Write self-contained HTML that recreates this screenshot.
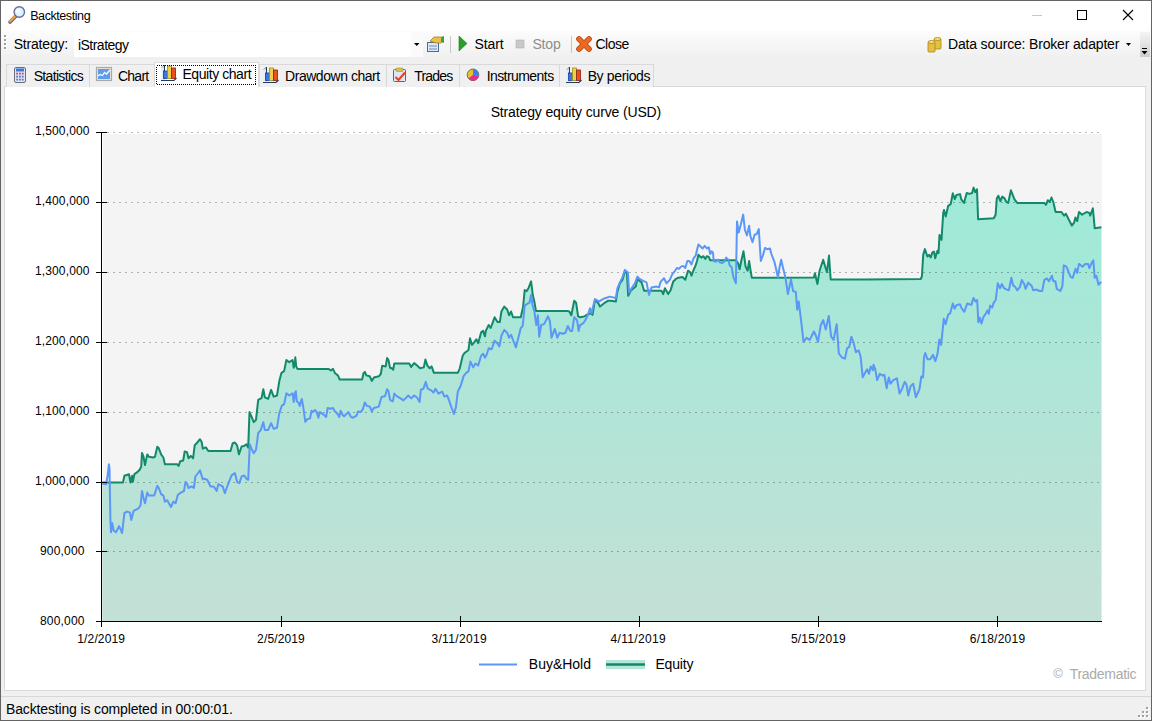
<!DOCTYPE html>
<html><head><meta charset="utf-8">
<style>
*{margin:0;padding:0;box-sizing:border-box}
html,body{width:1152px;height:721px;overflow:hidden;background:#fff;font-family:"Liberation Sans", sans-serif;color:#000}
.abs{position:absolute}
.t{position:absolute;white-space:nowrap}
.tab{position:absolute;top:64px;height:23px;background:#f0f0f0;border:1px solid #d9d9d9;border-bottom:none}
</style></head><body>
<div class="abs" style="left:1px;top:31px;width:1150px;height:27px;background:linear-gradient(#fcfcfc,#f0f0f0)"></div>
<div class="abs" style="left:74px;top:32px;width:349px;height:25px;background:#fff"></div>
<div class="abs" style="left:411px;top:32px;width:12px;height:25px;background:#fafafa"></div>
<div class="abs" style="left:1px;top:58px;width:1150px;height:638px;background:#f0f0f0"></div>
<div class="abs" style="left:1px;top:696px;width:1150px;height:1px;background:#d7d7d7"></div>
<div class="abs" style="left:1px;top:697px;width:1150px;height:23px;background:#f0f0f0"></div>
<div class="abs" style="left:4px;top:86px;width:1142px;height:605px;background:#fff;border:1px solid #d9d9d9"></div>
<div class="tab" style="left:6px;width:84px"></div>
<div class="tab" style="left:89px;width:66px"></div>
<div class="tab" style="left:259px;width:128px"></div>
<div class="tab" style="left:386px;width:74px"></div>
<div class="tab" style="left:459px;width:101px"></div>
<div class="tab" style="left:559px;width:95px"></div>
<div class="abs" style="left:154px;top:62px;width:105px;height:25px;background:#fff;border:1px solid #d9d9d9;border-bottom:none"></div>
<svg width="1152" height="721" style="position:absolute;left:0;top:0">
<defs><linearGradient id="fillg" x1="0" y1="185" x2="0" y2="621" gradientUnits="userSpaceOnUse"><stop offset="0" stop-color="#9eead8"/><stop offset="1" stop-color="#c4e0d6"/></linearGradient></defs>
<rect x="103" y="134" width="999" height="487" fill="#f4f4f4"/>
<path d="M102.3,482.6 L122.9,482.6 L124.4,475.8 L126.7,475.0 L129.0,474.2 L130.5,482.6 L132.1,475.8 L132.8,481.9 L134.4,474.2 L136.6,472.7 L139.7,469.7 L141.2,466.6 L142.0,452.9 L143.5,456.7 L145.0,465.1 L147.3,454.4 L148.9,456.7 L153.4,457.5 L155.0,456.7 L157.3,446.8 L158.8,448.3 L161.1,454.4 L163.4,457.5 L164.9,464.3 L177.1,464.3 L178.6,465.9 L180.2,461.3 L183.2,460.5 L184.7,451.4 L187.0,452.1 L188.5,458.2 L190.8,455.9 L193.1,458.2 L194.7,445.3 L196.9,443.0 L200.0,439.2 L201.7,442.1 L202.8,448.7 L205.0,447.6 L206.1,447.6 L208.3,451.0 L230.5,451.0 L232.7,443.2 L234.9,442.5 L237.1,445.4 L238.9,454.3 L241.6,446.5 L243.8,446.1 L246.4,444.3 L248.2,447.6 L249.5,412.1 L251.5,416.6 L253.8,422.1 L256.0,419.9 L258.2,399.9 L261.5,398.1 L263.3,389.3 L264.8,397.3 L268.2,398.8 L271.1,389.9 L273.7,396.6 L277.0,395.5 L279.3,381.1 L281.5,372.8 L284.1,371.1 L286.4,360.0 L289.2,362.2 L292.6,360.0 L293.7,367.7 L295.0,362.2 L295.3,357.3 L296.2,366.4 L297.6,369.1 L328.8,369.1 L330.9,370.5 L333.0,368.8 L335.1,373.3 L337.9,375.4 L339.7,379.5 L362.1,379.5 L363.5,373.3 L364.9,371.9 L366.3,375.4 L369.8,376.3 L371.8,380.9 L373.9,377.4 L376.7,376.8 L378.8,376.3 L380.8,374.0 L382.2,365.7 L385.7,366.4 L387.1,358.0 L388.5,360.1 L390.0,367.7 L391.8,368.3 L393.2,369.7 L394.3,363.5 L409.3,363.5 L411.2,367.0 L414.1,363.1 L417.0,365.4 L420.0,368.3 L423.8,367.4 L425.4,359.6 L427.3,365.4 L429.7,368.3 L431.6,366.4 L433.9,372.8 L457.8,372.8 L459.8,368.3 L462.7,355.7 L464.6,352.8 L466.6,351.5 L468.5,349.9 L470.0,338.3 L472.0,345.0 L474.3,342.1 L476.3,339.2 L478.2,343.1 L481.1,332.4 L483.1,330.9 L485.0,336.3 L485.8,330.9 L488.7,325.0 L490.7,328.0 L494.6,317.3 L497.5,322.1 L499.8,322.1 L501.4,311.5 L504.3,306.6 L507.2,309.5 L509.1,315.3 L511.1,311.5 L513.0,317.3 L520.8,317.3 L523.1,306.6 L524.7,290.1 L526.6,291.1 L528.5,288.2 L531.1,281.4 L532.8,295.0 L534.4,301.7 L535.9,310.9 L567.4,310.9 L569.3,311.5 L571.3,315.3 L574.2,300.8 L576.1,302.7 L578.1,316.3 L580.0,317.3 L584.2,316.5 L586.6,314.9 L590.8,313.2 L592.5,314.9 L595.0,299.9 L598.3,303.2 L600.0,306.6 L604.1,303.2 L608.3,300.7 L610.8,300.7 L615.8,301.6 L617.4,291.6 L619.9,283.3 L622.4,279.9 L624.9,271.6 L626.9,272.4 L628.2,295.7 L630.7,290.7 L635.7,286.6 L637.4,279.1 L641.6,282.4 L644.1,290.7 L649.0,290.7 L661.5,290.7 L663.2,294.1 L664.9,288.3 L668.2,294.1 L670.7,289.9 L673.2,281.6 L675.0,279.9 L675.5,279.1 L678.3,277.7 L682.5,277.0 L685.3,279.8 L688.0,270.7 L690.1,272.1 L691.5,275.6 L693.6,270.0 L695.7,265.2 L697.0,261.0 L698.4,254.8 L701.2,257.6 L703.3,256.2 L705.4,258.9 L706.8,256.2 L708.8,256.9 L710.2,260.3 L735.9,260.3 L738.0,263.1 L739.6,269.3 L741.4,260.3 L743.5,251.3 L745.6,266.6 L747.7,270.7 L749.1,261.0 L750.4,269.3 L751.8,277.7 L770.0,277.7 L813.9,277.4 L814.9,273.3 L817.4,284.1 L819.5,271.2 L821.1,266.0 L823.2,259.8 L825.3,267.0 L827.0,272.2 L829.0,255.6 L830.7,279.5 L865.0,279.5 L920.7,279.0 L921.9,276.5 L923.2,254.9 L924.9,249.1 L927.4,256.5 L929.1,254.9 L930.7,257.4 L932.4,252.4 L934.0,251.6 L935.2,258.2 L937.4,250.7 L938.5,253.2 L939.5,234.9 L941.5,239.9 L943.2,213.3 L944.0,209.9 L945.7,216.6 L948.2,205.8 L950.7,204.1 L952.8,193.3 L954.8,199.1 L956.5,195.0 L960.0,194.1 L961.3,199.3 L964.0,202.9 L966.7,193.0 L969.4,193.9 L972.1,193.0 L973.6,187.6 L975.2,192.1 L977.0,189.4 L978.1,219.2 L993.8,218.3 L995.6,214.7 L996.8,198.4 L998.3,195.7 L1000.4,201.1 L1002.2,196.6 L1004.6,198.4 L1006.4,202.0 L1008.2,202.9 L1010.9,190.3 L1012.7,194.8 L1014.5,199.3 L1017.2,202.9 L1044.2,202.9 L1046.0,204.8 L1047.8,200.2 L1049.7,202.0 L1051.5,197.5 L1053.3,202.0 L1055.6,212.0 L1061.4,212.0 L1064.1,215.6 L1065.9,213.8 L1068.6,219.2 L1071.8,225.5 L1074.0,222.8 L1075.4,217.4 L1077.2,221.0 L1079.0,212.0 L1082.1,214.7 L1086.6,212.0 L1089.3,212.9 L1090.2,215.6 L1092.9,208.4 L1094.7,228.2 L1101.4,227.3 L1101.4,621 L102.3,621 Z" fill="url(#fillg)"/>
<line x1="107" y1="132.5" x2="1102" y2="132.5" stroke="#000" stroke-opacity="0.27" stroke-width="1" stroke-dasharray="2,4" shape-rendering="crispEdges"/>
<line x1="107" y1="202.5" x2="1102" y2="202.5" stroke="#000" stroke-opacity="0.27" stroke-width="1" stroke-dasharray="2,4" shape-rendering="crispEdges"/>
<line x1="107" y1="272.5" x2="1102" y2="272.5" stroke="#000" stroke-opacity="0.27" stroke-width="1" stroke-dasharray="2,4" shape-rendering="crispEdges"/>
<line x1="107" y1="342.5" x2="1102" y2="342.5" stroke="#000" stroke-opacity="0.27" stroke-width="1" stroke-dasharray="2,4" shape-rendering="crispEdges"/>
<line x1="107" y1="412.5" x2="1102" y2="412.5" stroke="#000" stroke-opacity="0.27" stroke-width="1" stroke-dasharray="2,4" shape-rendering="crispEdges"/>
<line x1="107" y1="482.5" x2="1102" y2="482.5" stroke="#000" stroke-opacity="0.27" stroke-width="1" stroke-dasharray="2,4" shape-rendering="crispEdges"/>
<line x1="107" y1="551.5" x2="1102" y2="551.5" stroke="#000" stroke-opacity="0.27" stroke-width="1" stroke-dasharray="2,4" shape-rendering="crispEdges"/>
<path d="M102.3,482.6 L122.9,482.6 L124.4,475.8 L126.7,475.0 L129.0,474.2 L130.5,482.6 L132.1,475.8 L132.8,481.9 L134.4,474.2 L136.6,472.7 L139.7,469.7 L141.2,466.6 L142.0,452.9 L143.5,456.7 L145.0,465.1 L147.3,454.4 L148.9,456.7 L153.4,457.5 L155.0,456.7 L157.3,446.8 L158.8,448.3 L161.1,454.4 L163.4,457.5 L164.9,464.3 L177.1,464.3 L178.6,465.9 L180.2,461.3 L183.2,460.5 L184.7,451.4 L187.0,452.1 L188.5,458.2 L190.8,455.9 L193.1,458.2 L194.7,445.3 L196.9,443.0 L200.0,439.2 L201.7,442.1 L202.8,448.7 L205.0,447.6 L206.1,447.6 L208.3,451.0 L230.5,451.0 L232.7,443.2 L234.9,442.5 L237.1,445.4 L238.9,454.3 L241.6,446.5 L243.8,446.1 L246.4,444.3 L248.2,447.6 L249.5,412.1 L251.5,416.6 L253.8,422.1 L256.0,419.9 L258.2,399.9 L261.5,398.1 L263.3,389.3 L264.8,397.3 L268.2,398.8 L271.1,389.9 L273.7,396.6 L277.0,395.5 L279.3,381.1 L281.5,372.8 L284.1,371.1 L286.4,360.0 L289.2,362.2 L292.6,360.0 L293.7,367.7 L295.0,362.2 L295.3,357.3 L296.2,366.4 L297.6,369.1 L328.8,369.1 L330.9,370.5 L333.0,368.8 L335.1,373.3 L337.9,375.4 L339.7,379.5 L362.1,379.5 L363.5,373.3 L364.9,371.9 L366.3,375.4 L369.8,376.3 L371.8,380.9 L373.9,377.4 L376.7,376.8 L378.8,376.3 L380.8,374.0 L382.2,365.7 L385.7,366.4 L387.1,358.0 L388.5,360.1 L390.0,367.7 L391.8,368.3 L393.2,369.7 L394.3,363.5 L409.3,363.5 L411.2,367.0 L414.1,363.1 L417.0,365.4 L420.0,368.3 L423.8,367.4 L425.4,359.6 L427.3,365.4 L429.7,368.3 L431.6,366.4 L433.9,372.8 L457.8,372.8 L459.8,368.3 L462.7,355.7 L464.6,352.8 L466.6,351.5 L468.5,349.9 L470.0,338.3 L472.0,345.0 L474.3,342.1 L476.3,339.2 L478.2,343.1 L481.1,332.4 L483.1,330.9 L485.0,336.3 L485.8,330.9 L488.7,325.0 L490.7,328.0 L494.6,317.3 L497.5,322.1 L499.8,322.1 L501.4,311.5 L504.3,306.6 L507.2,309.5 L509.1,315.3 L511.1,311.5 L513.0,317.3 L520.8,317.3 L523.1,306.6 L524.7,290.1 L526.6,291.1 L528.5,288.2 L531.1,281.4 L532.8,295.0 L534.4,301.7 L535.9,310.9 L567.4,310.9 L569.3,311.5 L571.3,315.3 L574.2,300.8 L576.1,302.7 L578.1,316.3 L580.0,317.3 L584.2,316.5 L586.6,314.9 L590.8,313.2 L592.5,314.9 L595.0,299.9 L598.3,303.2 L600.0,306.6 L604.1,303.2 L608.3,300.7 L610.8,300.7 L615.8,301.6 L617.4,291.6 L619.9,283.3 L622.4,279.9 L624.9,271.6 L626.9,272.4 L628.2,295.7 L630.7,290.7 L635.7,286.6 L637.4,279.1 L641.6,282.4 L644.1,290.7 L649.0,290.7 L661.5,290.7 L663.2,294.1 L664.9,288.3 L668.2,294.1 L670.7,289.9 L673.2,281.6 L675.0,279.9 L675.5,279.1 L678.3,277.7 L682.5,277.0 L685.3,279.8 L688.0,270.7 L690.1,272.1 L691.5,275.6 L693.6,270.0 L695.7,265.2 L697.0,261.0 L698.4,254.8 L701.2,257.6 L703.3,256.2 L705.4,258.9 L706.8,256.2 L708.8,256.9 L710.2,260.3 L735.9,260.3 L738.0,263.1 L739.6,269.3 L741.4,260.3 L743.5,251.3 L745.6,266.6 L747.7,270.7 L749.1,261.0 L750.4,269.3 L751.8,277.7 L770.0,277.7 L813.9,277.4 L814.9,273.3 L817.4,284.1 L819.5,271.2 L821.1,266.0 L823.2,259.8 L825.3,267.0 L827.0,272.2 L829.0,255.6 L830.7,279.5 L865.0,279.5 L920.7,279.0 L921.9,276.5 L923.2,254.9 L924.9,249.1 L927.4,256.5 L929.1,254.9 L930.7,257.4 L932.4,252.4 L934.0,251.6 L935.2,258.2 L937.4,250.7 L938.5,253.2 L939.5,234.9 L941.5,239.9 L943.2,213.3 L944.0,209.9 L945.7,216.6 L948.2,205.8 L950.7,204.1 L952.8,193.3 L954.8,199.1 L956.5,195.0 L960.0,194.1 L961.3,199.3 L964.0,202.9 L966.7,193.0 L969.4,193.9 L972.1,193.0 L973.6,187.6 L975.2,192.1 L977.0,189.4 L978.1,219.2 L993.8,218.3 L995.6,214.7 L996.8,198.4 L998.3,195.7 L1000.4,201.1 L1002.2,196.6 L1004.6,198.4 L1006.4,202.0 L1008.2,202.9 L1010.9,190.3 L1012.7,194.8 L1014.5,199.3 L1017.2,202.9 L1044.2,202.9 L1046.0,204.8 L1047.8,200.2 L1049.7,202.0 L1051.5,197.5 L1053.3,202.0 L1055.6,212.0 L1061.4,212.0 L1064.1,215.6 L1065.9,213.8 L1068.6,219.2 L1071.8,225.5 L1074.0,222.8 L1075.4,217.4 L1077.2,221.0 L1079.0,212.0 L1082.1,214.7 L1086.6,212.0 L1089.3,212.9 L1090.2,215.6 L1092.9,208.4 L1094.7,228.2 L1101.4,227.3" fill="none" stroke="#13896b" stroke-width="2" stroke-linejoin="round"/>
<path d="M102.3,483.4 L106.1,484.2 L107.6,475.8 L108.9,464.3 L109.5,468.1 L110.4,520.0 L111.0,532.2 L112.2,523.1 L113.7,530.7 L116.0,532.2 L119.1,526.1 L122.1,533.0 L124.4,513.1 L126.7,511.6 L129.8,512.4 L131.3,520.0 L133.6,510.9 L138.2,508.6 L140.5,505.5 L142.0,491.0 L143.5,497.9 L145.0,503.2 L147.3,492.6 L148.9,495.6 L154.2,495.6 L157.3,485.7 L158.8,488.0 L161.1,494.1 L163.4,495.6 L164.9,501.7 L167.2,500.2 L171.0,507.0 L173.3,501.7 L175.6,503.2 L177.9,494.8 L180.9,492.6 L184.0,491.0 L185.5,481.9 L187.0,483.4 L188.5,488.0 L191.6,486.4 L193.9,488.0 L195.4,476.5 L197.7,473.5 L200.0,470.4 L202.8,479.4 L204.3,478.7 L207.2,479.8 L210.5,486.5 L213.8,486.5 L216.7,490.9 L218.3,484.2 L222.7,486.5 L224.9,493.1 L227.2,486.5 L231.6,475.4 L234.9,473.1 L237.1,482.0 L239.3,483.1 L241.6,476.5 L244.2,475.4 L246.4,478.7 L248.2,479.8 L249.8,444.3 L251.5,448.7 L253.8,453.2 L256.0,449.8 L258.2,433.2 L260.9,429.9 L263.3,422.1 L264.8,429.9 L268.2,429.9 L271.1,423.2 L273.7,428.8 L277.0,427.7 L279.3,413.2 L281.9,405.5 L284.1,404.4 L286.4,393.3 L289.2,395.5 L292.6,393.3 L293.7,402.1 L295.0,393.3 L295.8,391.3 L296.7,401.0 L298.3,402.4 L299.7,405.9 L301.8,398.9 L303.2,406.6 L305.3,421.8 L307.3,419.1 L310.1,418.4 L311.5,410.7 L312.9,412.1 L315.0,410.0 L316.4,411.4 L318.4,417.7 L319.8,412.1 L324.0,414.9 L326.1,417.0 L327.7,408.0 L330.2,408.7 L333.0,408.0 L334.4,410.7 L337.2,413.5 L339.2,417.0 L340.6,410.7 L342.0,414.2 L344.1,416.3 L348.3,412.1 L351.0,417.0 L353.1,417.7 L356.6,415.6 L358.0,411.4 L360.7,412.1 L362.8,409.3 L364.9,402.4 L367.0,405.9 L369.8,406.6 L371.8,411.4 L373.9,408.0 L378.8,406.6 L381.5,396.9 L385.0,396.2 L387.1,389.2 L388.5,391.3 L390.0,399.6 L390.8,400.4 L392.8,401.4 L394.3,393.6 L396.7,396.1 L400.5,398.4 L403.4,400.4 L408.3,395.5 L411.2,398.4 L414.1,395.5 L417.0,397.5 L419.6,401.9 L420.9,389.7 L423.4,388.7 L425.8,381.9 L427.7,388.7 L431.6,390.7 L433.5,392.6 L435.5,388.7 L438.4,393.6 L442.3,391.7 L444.2,396.5 L447.1,395.5 L449.1,400.4 L451.0,406.2 L453.9,414.0 L455.9,407.2 L457.8,391.7 L460.7,385.8 L463.6,376.1 L466.2,372.8 L468.5,371.3 L470.4,361.6 L473.3,367.4 L475.3,363.5 L478.2,365.4 L481.1,355.7 L483.1,353.8 L485.0,357.7 L486.8,354.2 L488.7,348.3 L491.7,349.3 L494.6,340.6 L497.5,343.5 L499.4,346.4 L501.4,335.7 L504.3,329.9 L507.2,332.8 L509.1,337.7 L511.1,334.8 L514.0,342.5 L515.9,347.4 L517.9,339.6 L520.8,328.0 L522.7,326.0 L524.7,305.6 L527.6,303.7 L529.5,302.7 L531.1,295.0 L532.4,304.7 L534.4,311.5 L536.3,325.0 L537.9,315.3 L539.2,336.7 L541.2,325.0 L544.1,324.1 L548.0,316.3 L549.9,321.2 L551.5,337.7 L554.8,328.9 L557.3,337.7 L559.6,332.8 L562.5,333.8 L565.4,332.8 L567.8,326.0 L570.3,330.9 L572.2,330.9 L574.2,317.3 L577.1,320.2 L578.6,330.9 L580.0,325.0 L580.8,324.9 L583.3,323.2 L585.0,320.7 L587.5,315.7 L590.0,308.2 L591.6,313.2 L593.3,305.7 L595.0,299.1 L599.1,301.6 L601.6,299.9 L605.0,298.2 L609.9,296.6 L613.3,297.4 L615.8,298.2 L617.4,288.3 L619.9,282.4 L622.4,277.4 L624.9,269.9 L627.9,272.4 L629.1,292.4 L631.6,288.3 L634.9,283.3 L637.4,276.6 L639.9,279.1 L643.2,280.8 L646.5,282.4 L649.0,294.9 L651.5,287.4 L656.5,286.6 L659.0,287.4 L660.7,281.6 L664.0,278.3 L666.5,283.3 L669.8,279.9 L672.3,274.1 L675.0,270.8 L676.9,268.0 L679.0,268.7 L681.1,266.6 L683.2,265.9 L685.3,268.0 L687.3,261.0 L689.4,261.0 L691.5,264.5 L693.6,258.3 L695.7,255.5 L697.0,249.9 L698.4,244.4 L700.5,246.5 L702.6,248.5 L704.7,245.8 L706.8,248.5 L708.8,247.2 L710.2,254.1 L711.6,251.3 L713.0,252.7 L713.7,261.0 L715.8,261.7 L717.9,259.6 L719.9,262.4 L722.0,263.1 L724.1,261.7 L726.2,257.6 L728.3,259.6 L729.6,265.2 L731.7,267.3 L733.5,277.7 L735.9,283.2 L737.0,221.5 L738.7,232.6 L740.7,225.0 L743.2,214.6 L744.9,229.8 L747.0,235.4 L749.1,225.7 L750.4,236.1 L752.5,242.3 L754.6,234.7 L756.7,234.0 L758.8,229.1 L760.8,261.0 L762.9,255.5 L765.0,247.9 L767.1,249.2 L770.0,248.5 L771.2,253.5 L774.4,261.8 L776.4,270.2 L777.9,277.4 L779.6,267.0 L781.2,259.8 L783.3,269.1 L785.4,277.4 L787.9,294.1 L791.0,279.5 L793.1,291.0 L795.8,292.0 L797.2,309.7 L798.7,301.4 L801.4,323.2 L803.5,341.9 L806.6,337.8 L809.7,339.9 L813.9,331.5 L815.9,335.7 L818.0,341.9 L820.7,325.3 L823.2,320.1 L825.7,329.5 L828.8,315.9 L831.1,336.7 L833.6,339.9 L836.7,324.3 L838.8,353.4 L841.9,357.5 L845.0,358.6 L847.1,348.2 L849.2,347.1 L851.3,336.7 L853.4,341.9 L855.9,352.3 L858.6,350.3 L860.6,356.5 L862.7,377.3 L865.0,373.1 L867.2,369.3 L869.0,373.8 L870.8,366.5 L873.0,370.2 L873.5,364.7 L875.3,369.3 L877.1,380.1 L879.8,373.8 L882.5,375.6 L884.3,374.7 L886.7,388.2 L888.8,377.4 L890.6,383.7 L893.3,380.1 L896.9,378.3 L899.6,393.6 L902.3,388.2 L904.7,381.9 L906.5,384.6 L908.3,395.4 L910.5,386.4 L913.2,383.7 L915.9,397.2 L919.5,389.1 L921.3,376.5 L923.1,377.4 L924.0,357.5 L925.2,353.0 L927.6,359.3 L930.3,359.3 L933.0,354.8 L935.3,361.1 L937.5,353.9 L939.3,339.5 L941.1,344.9 L943.8,318.8 L945.6,324.2 L948.3,314.3 L950.1,313.4 L952.8,303.4 L954.6,308.8 L956.4,305.2 L960.0,304.3 L961.7,308.3 L964.4,311.8 L967.2,303.5 L969.3,304.2 L971.4,304.9 L973.5,297.9 L975.6,301.4 L977.2,300.0 L978.3,322.2 L979.7,317.4 L981.4,323.6 L983.2,317.4 L986.0,313.2 L987.4,310.4 L988.8,313.9 L990.1,305.6 L992.2,307.6 L993.6,302.8 L995.7,300.0 L997.8,283.3 L999.9,288.2 L1001.9,284.0 L1004.0,288.2 L1006.8,289.6 L1008.9,290.3 L1011.4,277.8 L1013.1,285.4 L1015.1,286.8 L1017.2,290.3 L1020.0,286.8 L1021.8,279.9 L1024.2,284.0 L1025.6,288.9 L1028.3,282.6 L1031.8,286.1 L1033.2,290.3 L1036.7,289.6 L1039.4,291.0 L1042.2,291.0 L1044.3,279.9 L1047.1,278.5 L1048.9,281.2 L1051.9,275.7 L1053.3,281.2 L1055.4,281.2 L1056.8,288.9 L1060.3,291.0 L1062.4,286.1 L1063.8,265.3 L1066.5,266.7 L1068.6,272.2 L1070.7,277.1 L1072.8,277.8 L1075.6,268.8 L1077.2,272.9 L1079.0,263.9 L1082.5,266.7 L1085.3,263.9 L1088.1,263.9 L1089.4,268.1 L1091.5,263.2 L1093.3,260.4 L1094.7,277.8 L1096.4,275.7 L1098.5,284.7 L1101.2,281.9" fill="none" stroke="#5b97f6" stroke-width="2" stroke-linejoin="round"/>
<line x1="101.5" y1="132" x2="101.5" y2="627" stroke="#000" stroke-width="1"/>
<line x1="96" y1="621.5" x2="1102" y2="621.5" stroke="#000" stroke-width="1"/>
<line x1="96" y1="132.5" x2="107" y2="132.5" stroke="#000" stroke-width="1"/>
<line x1="96" y1="202.5" x2="107" y2="202.5" stroke="#000" stroke-width="1"/>
<line x1="96" y1="272.5" x2="107" y2="272.5" stroke="#000" stroke-width="1"/>
<line x1="96" y1="342.5" x2="107" y2="342.5" stroke="#000" stroke-width="1"/>
<line x1="96" y1="412.5" x2="107" y2="412.5" stroke="#000" stroke-width="1"/>
<line x1="96" y1="482.5" x2="107" y2="482.5" stroke="#000" stroke-width="1"/>
<line x1="96" y1="551.5" x2="107" y2="551.5" stroke="#000" stroke-width="1"/>
<line x1="96" y1="621.5" x2="107" y2="621.5" stroke="#000" stroke-width="1"/>
<line x1="101.5" y1="616" x2="101.5" y2="627" stroke="#000" stroke-width="1"/>
<line x1="281.5" y1="616" x2="281.5" y2="627" stroke="#000" stroke-width="1"/>
<line x1="460.5" y1="616" x2="460.5" y2="627" stroke="#000" stroke-width="1"/>
<line x1="639.5" y1="616" x2="639.5" y2="627" stroke="#000" stroke-width="1"/>
<line x1="818.5" y1="616" x2="818.5" y2="627" stroke="#000" stroke-width="1"/>
<line x1="997.5" y1="616" x2="997.5" y2="627" stroke="#000" stroke-width="1"/>
<line x1="479" y1="664.5" x2="517" y2="664.5" stroke="#5b97f6" stroke-width="2"/>
<rect x="606" y="660" width="39" height="9" fill="#b6e6d6"/>
<line x1="606" y1="664.5" x2="645" y2="664.5" stroke="#13896b" stroke-width="2.5"/>
<g><line x1="10" y1="22" x2="15.5" y2="16.5" stroke="#5a5a8a" stroke-width="3.6" stroke-linecap="round"/><line x1="10" y1="21.3" x2="15" y2="16.3" stroke="#f0a030" stroke-width="2.4" stroke-linecap="round"/><circle cx="19.3" cy="12" r="5.2" fill="#d8f4ff" stroke="#6a6a9a" stroke-width="1.4"/><circle cx="18.3" cy="11" r="2.5" fill="#ffffff" opacity="0.6"/></g>
<line x1="1032" y1="15.5" x2="1042" y2="15.5" stroke="#c8c8c8" stroke-width="1"/>
<rect x="1077.5" y="10.5" width="9" height="9" fill="none" stroke="#000" stroke-width="1"/>
<path d="M1123,10 L1133,20 M1133,10 L1123,20" stroke="#000" stroke-width="1.1"/>
<rect x="5" y="36" width="2" height="2" fill="#fff"/><rect x="4" y="35" width="2" height="2" fill="#a0a0a0"/>
<rect x="5" y="40" width="2" height="2" fill="#fff"/><rect x="4" y="39" width="2" height="2" fill="#a0a0a0"/>
<rect x="5" y="44" width="2" height="2" fill="#fff"/><rect x="4" y="43" width="2" height="2" fill="#a0a0a0"/>
<rect x="5" y="48" width="2" height="2" fill="#fff"/><rect x="4" y="47" width="2" height="2" fill="#a0a0a0"/>
<path d="M414,43 L419.5,43 L416.75,46 Z" fill="#000"/>
<g><rect x="427.5" y="42.5" width="11" height="9" fill="#dfe8f5" stroke="#4a6a9a" stroke-width="1"/><line x1="429" y1="46" x2="437" y2="46" stroke="#6b8cc0"/><line x1="429" y1="49" x2="437" y2="49" stroke="#6b8cc0"/><path d="M430,41 L434,37 L441,37 L443,39 L441,43 L436,43 Z" fill="#e8c050" stroke="#a08020" stroke-width="0.8"/><path d="M441,37 L444,36 L444,43 L441,42 Z" fill="#40a040"/></g>
<line x1="450.5" y1="36" x2="450.5" y2="53" stroke="#c6c6c6"/><line x1="571.5" y1="36" x2="571.5" y2="53" stroke="#c6c6c6"/>
<path d="M459,36 L467,43.5 L459,51 Z" fill="#2aa02a" stroke="#1a7a1a" stroke-width="0.6"/>
<rect x="516" y="40" width="8" height="8" fill="#c8c8c8" stroke="#b0b0b0" stroke-width="0.6"/>
<path d="M579,39 L589,49 M589,39 L579,49" stroke="#b84010" stroke-width="5.6" stroke-linecap="round"/><path d="M579,39 L589,49 M589,39 L579,49" stroke="#ec6a20" stroke-width="4.2" stroke-linecap="round"/>
<g><rect x="934" y="39" width="7" height="10" rx="1" fill="#e6c040" stroke="#a88418" stroke-width="0.8"/><ellipse cx="937.5" cy="39" rx="3.5" ry="1.5" fill="#f6e080" stroke="#a88418" stroke-width="0.8"/><rect x="928" y="42" width="7" height="10" rx="1" fill="#e6c040" stroke="#a88418" stroke-width="0.8"/><ellipse cx="931.5" cy="42" rx="3.5" ry="1.5" fill="#f6e080" stroke="#a88418" stroke-width="0.8"/></g>
<path d="M1126,43 L1131,43 L1128.5,46 Z" fill="#000"/>
<defs><linearGradient id="ovf" x1="0" y1="0" x2="0" y2="1"><stop offset="0" stop-color="#f4f4f4"/><stop offset="1" stop-color="#cfcfcf"/></linearGradient></defs><rect x="1140" y="32" width="10" height="25" fill="url(#ovf)"/><line x1="1142" y1="48.5" x2="1147" y2="48.5" stroke="#000"/><path d="M1141.5,51 L1147.5,51 L1144.5,54.5 Z" fill="#000"/>
<g><rect x="14.5" y="67.5" width="11" height="15" rx="1.5" fill="#dfe6f2" stroke="#6a7080" stroke-width="1"/><rect x="16" y="68.5" width="8" height="3" fill="#3a74e0"/><rect x="16.2" y="72.7" width="1.8" height="1.8" fill="#d84050"/><rect x="19.0" y="72.7" width="1.8" height="1.8" fill="#d84050"/><rect x="21.799999999999997" y="72.7" width="1.8" height="1.8" fill="#d84050"/><rect x="16.2" y="75.7" width="1.8" height="1.8" fill="#5078d0"/><rect x="16.2" y="78.7" width="1.8" height="1.8" fill="#5078d0"/><rect x="19.0" y="75.7" width="1.8" height="1.8" fill="#5078d0"/><rect x="19.0" y="78.7" width="1.8" height="1.8" fill="#5078d0"/><rect x="21.799999999999997" y="75.7" width="1.8" height="1.8" fill="#5078d0"/><rect x="21.799999999999997" y="78.7" width="1.8" height="1.8" fill="#5078d0"/></g>
<g><rect x="96.5" y="67.5" width="15" height="13" fill="#e8e4dc" stroke="#a8a8a8" stroke-width="1.2"/><rect x="98" y="69" width="12" height="10" fill="#5e9cec"/><path d="M98,76 L100,74.5 L102.5,75.5 L104.5,72.5 L106.5,74 L110,70" fill="none" stroke="#fff" stroke-width="1.3"/></g>
<g><path d="M161.5,68 L164,65 L164,80" fill="none" stroke="#9aa4b8" stroke-width="1"/><rect x="161.5" y="68" width="3" height="12" fill="#e4ecf6"/><line x1="164.5" y1="65" x2="164.5" y2="72" stroke="#1e3a66" stroke-width="1"/><rect x="163.5" y="71" width="4" height="7.5" fill="#3a78e0" stroke="#1a3aa0" stroke-width="0.8"/><rect x="167.5" y="66" width="4" height="12.5" fill="#f0d040" stroke="#9a9020" stroke-width="0.8"/><rect x="171.5" y="68" width="4" height="10.5" fill="#e85020" stroke="#8a2010" stroke-width="0.8"/><path d="M161,80.5 L174,80.5 L176.5,78" fill="none" stroke="#1e3a66" stroke-width="1.2"/></g>
<g><path d="M263.5,70 L266,67 L266,82" fill="none" stroke="#9aa4b8" stroke-width="1"/><rect x="263.5" y="70" width="3" height="12" fill="#e4ecf6"/><line x1="266.5" y1="67" x2="266.5" y2="74" stroke="#1e3a66" stroke-width="1"/><rect x="265.5" y="73" width="4" height="7.5" fill="#3a78e0" stroke="#1a3aa0" stroke-width="0.8"/><rect x="269.5" y="68" width="4" height="12.5" fill="#f0d040" stroke="#9a9020" stroke-width="0.8"/><rect x="273.5" y="70" width="4" height="10.5" fill="#e85020" stroke="#8a2010" stroke-width="0.8"/><path d="M263,82.5 L276,82.5 L278.5,80" fill="none" stroke="#1e3a66" stroke-width="1.2"/></g>
<g><path d="M566.5,70 L569,67 L569,82" fill="none" stroke="#9aa4b8" stroke-width="1"/><rect x="566.5" y="70" width="3" height="12" fill="#e4ecf6"/><line x1="569.5" y1="67" x2="569.5" y2="74" stroke="#1e3a66" stroke-width="1"/><rect x="568.5" y="73" width="4" height="7.5" fill="#3a78e0" stroke="#1a3aa0" stroke-width="0.8"/><rect x="572.5" y="68" width="4" height="12.5" fill="#f0d040" stroke="#9a9020" stroke-width="0.8"/><rect x="576.5" y="70" width="4" height="10.5" fill="#e85020" stroke="#8a2010" stroke-width="0.8"/><path d="M566,82.5 L579,82.5 L581.5,80" fill="none" stroke="#1e3a66" stroke-width="1.2"/></g>
<g><rect x="393.5" y="69.5" width="12" height="12" rx="1" fill="#dce6f4" stroke="#506890" stroke-width="1"/><rect x="396" y="68" width="7" height="3.5" rx="1" fill="#d8c050" stroke="#a09030" stroke-width="0.6"/><path d="M395.5,77 L398.5,80 L405,72.5" fill="none" stroke="#e84020" stroke-width="2"/></g>
<g><circle cx="473" cy="74.8" r="5.8" fill="#e8c030" stroke="#505050" stroke-width="0.8"/><path d="M473,74.8 L473,69 A5.8,5.8 0 0 1 478.7,75.8 Z" fill="#3a80f0"/><path d="M473,74.8 L478.7,75.8 A5.8,5.8 0 0 1 468.5,78.5 Z" fill="#e03090"/></g>
<rect x="1147" y="708" width="2" height="2" fill="#fff"/><rect x="1146" y="707" width="2" height="2" fill="#a0a0a0"/>
<rect x="1143" y="712" width="2" height="2" fill="#fff"/><rect x="1142" y="711" width="2" height="2" fill="#a0a0a0"/>
<rect x="1147" y="712" width="2" height="2" fill="#fff"/><rect x="1146" y="711" width="2" height="2" fill="#a0a0a0"/>
<rect x="1139" y="716" width="2" height="2" fill="#fff"/><rect x="1138" y="715" width="2" height="2" fill="#a0a0a0"/>
<rect x="1143" y="716" width="2" height="2" fill="#fff"/><rect x="1142" y="715" width="2" height="2" fill="#a0a0a0"/>
<rect x="1147" y="716" width="2" height="2" fill="#fff"/><rect x="1146" y="715" width="2" height="2" fill="#a0a0a0"/>
<rect x="156.5" y="65.5" width="99" height="19" fill="none" stroke="#000" stroke-width="1" stroke-dasharray="1,1" shape-rendering="crispEdges"/>
</svg>
<div class="t" style="left:30.20px;top:7.67px;font-size:12.5px;line-height:16px;letter-spacing:-0.422px;color:#000;">Backtesting</div>
<div class="t" style="left:13.64px;top:34.75px;font-size:14px;line-height:18px;letter-spacing:-0.176px;color:#000;">Strategy:</div>
<div class="t" style="left:77.94px;top:35.85px;font-size:14px;line-height:18px;letter-spacing:-0.516px;color:#000;">iStrategy</div>
<div class="t" style="left:474.44px;top:34.75px;font-size:14px;line-height:18px;letter-spacing:-0.061px;color:#000;">Start</div>
<div class="t" style="left:532.44px;top:34.75px;font-size:14px;line-height:18px;letter-spacing:-0.159px;color:#8d8d8d;">Stop</div>
<div class="t" style="left:595.44px;top:34.75px;font-size:14px;line-height:18px;letter-spacing:-0.493px;color:#000;">Close</div>
<div class="t" style="left:948.04px;top:34.85px;font-size:14px;line-height:18px;letter-spacing:-0.174px;color:#000;">Data source: Broker adapter</div>
<div class="t" style="left:33.64px;top:66.85px;font-size:14px;line-height:18px;letter-spacing:-0.655px;color:#000;">Statistics</div>
<div class="t" style="left:118.04px;top:66.85px;font-size:14px;line-height:18px;letter-spacing:-0.778px;color:#000;">Chart</div>
<div class="t" style="left:182.44px;top:64.85px;font-size:14px;line-height:18px;letter-spacing:-0.436px;color:#000;">Equity chart</div>
<div class="t" style="left:285.04px;top:66.85px;font-size:14px;line-height:18px;letter-spacing:-0.464px;color:#000;">Drawdown chart</div>
<div class="t" style="left:414.24px;top:66.85px;font-size:14px;line-height:18px;letter-spacing:-0.786px;color:#000;">Trades</div>
<div class="t" style="left:486.64px;top:66.85px;font-size:14px;line-height:18px;letter-spacing:-0.561px;color:#000;">Instruments</div>
<div class="t" style="left:587.64px;top:66.85px;font-size:14px;line-height:18px;letter-spacing:-0.358px;color:#000;">By periods</div>
<div class="t" style="left:490.64px;top:103.15px;font-size:14px;line-height:18px;letter-spacing:-0.141px;color:#000;">Strategy equity curve (USD)</div>
<div class="t" style="left:34.93px;top:124.34px;font-size:12px;line-height:15px;letter-spacing:0.145px;color:#000;">1,500,000</div>
<div class="t" style="left:34.93px;top:194.34px;font-size:12px;line-height:15px;letter-spacing:0.145px;color:#000;">1,400,000</div>
<div class="t" style="left:34.93px;top:264.34px;font-size:12px;line-height:15px;letter-spacing:0.145px;color:#000;">1,300,000</div>
<div class="t" style="left:34.93px;top:334.34px;font-size:12px;line-height:15px;letter-spacing:0.145px;color:#000;">1,200,000</div>
<div class="t" style="left:34.93px;top:404.34px;font-size:12px;line-height:15px;letter-spacing:0.145px;color:#000;">1,100,000</div>
<div class="t" style="left:34.93px;top:474.34px;font-size:12px;line-height:15px;letter-spacing:0.145px;color:#000;">1,000,000</div>
<div class="t" style="left:39.93px;top:544.34px;font-size:12px;line-height:15px;letter-spacing:0.193px;color:#000;">900,000</div>
<div class="t" style="left:39.93px;top:614.34px;font-size:12px;line-height:15px;letter-spacing:0.193px;color:#000;">800,000</div>
<div class="t" style="left:77.32px;top:632.34px;font-size:12px;line-height:15px;letter-spacing:0.136px;color:#000;">1/2/2019</div>
<div class="t" style="left:257.12px;top:632.34px;font-size:12px;line-height:15px;letter-spacing:0.136px;color:#000;">2/5/2019</div>
<div class="t" style="left:431.42px;top:632.34px;font-size:12px;line-height:15px;letter-spacing:0.334px;color:#000;">3/11/2019</div>
<div class="t" style="left:610.52px;top:632.34px;font-size:12px;line-height:15px;letter-spacing:0.334px;color:#000;">4/11/2019</div>
<div class="t" style="left:790.92px;top:632.34px;font-size:12px;line-height:15px;letter-spacing:0.185px;color:#000;">5/15/2019</div>
<div class="t" style="left:969.82px;top:632.34px;font-size:12px;line-height:15px;letter-spacing:0.235px;color:#000;">6/18/2019</div>
<div class="t" style="left:528.84px;top:654.95px;font-size:14px;line-height:18px;letter-spacing:-0.019px;color:#000;">Buy&amp;Hold</div>
<div class="t" style="left:655.44px;top:654.95px;font-size:14px;line-height:18px;letter-spacing:-0.158px;color:#000;">Equity</div>
<div class="t" style="left:1053.28px;top:666.10px;font-size:13px;line-height:16px;letter-spacing:0.000px;color:#ababab;">©</div>
<div class="t" style="left:1069.74px;top:664.75px;font-size:14px;line-height:18px;letter-spacing:-0.297px;color:#ababab;">Tradematic</div>
<div class="t" style="left:5.94px;top:699.95px;font-size:14px;line-height:18px;letter-spacing:-0.141px;color:#000;">Backtesting is completed in 00:00:01.</div>
<div class="abs" style="left:0;top:0;width:1152px;height:721px;border:1px solid #646464;pointer-events:none"></div>
</body></html>
